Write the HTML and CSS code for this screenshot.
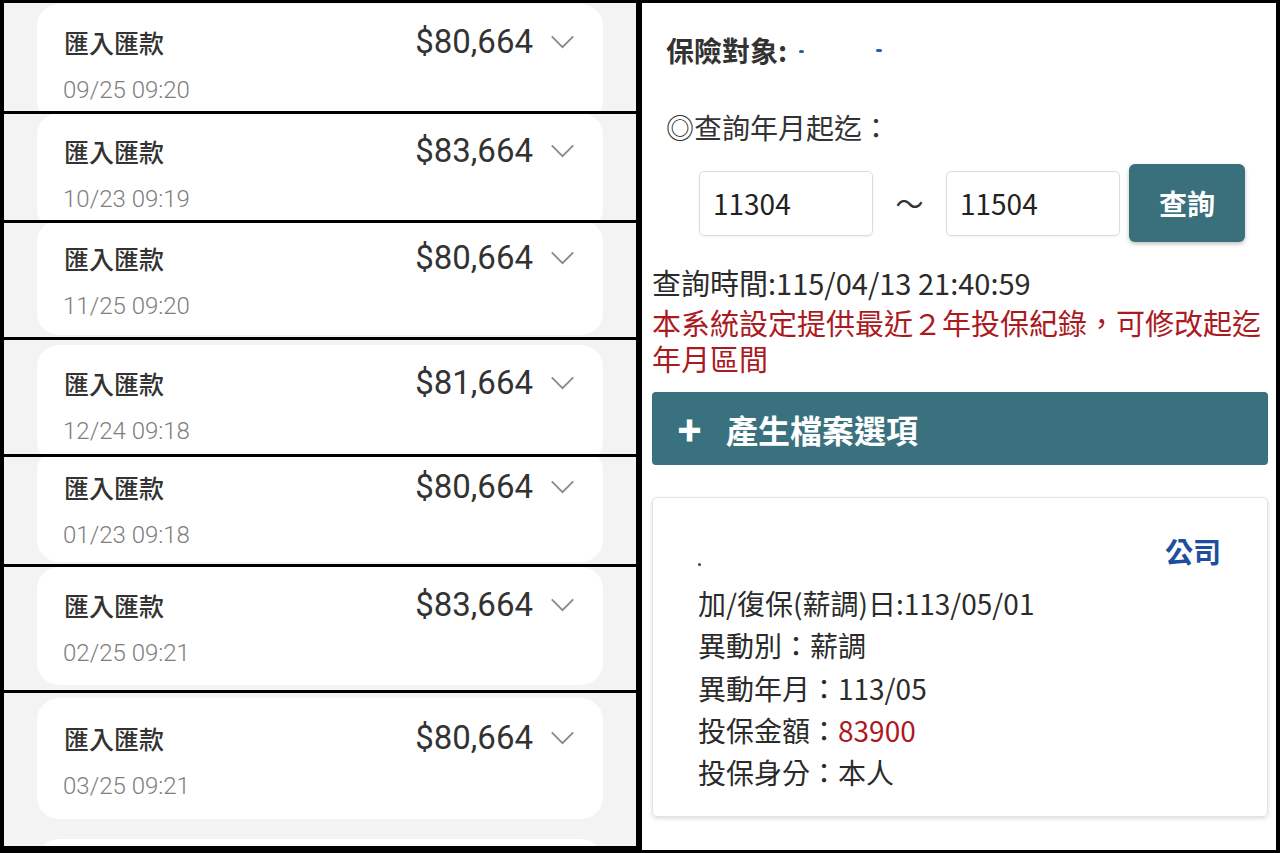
FILE: index.html
```html
<!DOCTYPE html>
<html lang="zh-Hant">
<head>
<meta charset="utf-8">
<title>匯款與投保紀錄</title>
<link rel="stylesheet" href="styles.css">
</head>
<body>
<div class="collage">
  <div class="left">
    <div class="strip s1">
      <div class="card">
        <div class="row"><span class="title">匯入匯款</span><span class="amt">$80,664<svg class="chev" viewBox="0 0 26 15"><polyline points="1.5,1.5 13,13 24.5,1.5"/></svg></span></div>
        <div class="date">09/25 09:20</div>
      </div>
    </div>
    <div class="strip s2">
      <div class="card">
        <div class="row"><span class="title">匯入匯款</span><span class="amt">$83,664<svg class="chev" viewBox="0 0 26 15"><polyline points="1.5,1.5 13,13 24.5,1.5"/></svg></span></div>
        <div class="date">10/23 09:19</div>
      </div>
    </div>
    <div class="strip s3">
      <div class="card">
        <div class="row"><span class="title">匯入匯款</span><span class="amt">$80,664<svg class="chev" viewBox="0 0 26 15"><polyline points="1.5,1.5 13,13 24.5,1.5"/></svg></span></div>
        <div class="date">11/25 09:20</div>
      </div>
    </div>
    <div class="strip s4">
      <div class="card">
        <div class="row"><span class="title">匯入匯款</span><span class="amt">$81,664<svg class="chev" viewBox="0 0 26 15"><polyline points="1.5,1.5 13,13 24.5,1.5"/></svg></span></div>
        <div class="date">12/24 09:18</div>
      </div>
    </div>
    <div class="strip s5">
      <div class="card">
        <div class="row"><span class="title">匯入匯款</span><span class="amt">$80,664<svg class="chev" viewBox="0 0 26 15"><polyline points="1.5,1.5 13,13 24.5,1.5"/></svg></span></div>
        <div class="date">01/23 09:18</div>
      </div>
    </div>
    <div class="strip s6">
      <div class="card">
        <div class="row"><span class="title">匯入匯款</span><span class="amt">$83,664<svg class="chev" viewBox="0 0 26 15"><polyline points="1.5,1.5 13,13 24.5,1.5"/></svg></span></div>
        <div class="date">02/25 09:21</div>
      </div>
    </div>
    <div class="strip s7">
      <div class="card">
        <div class="row"><span class="title">匯入匯款</span><span class="amt">$80,664<svg class="chev" viewBox="0 0 26 15"><polyline points="1.5,1.5 13,13 24.5,1.5"/></svg></span></div>
        <div class="date">03/25 09:21</div>
      </div>
      <div class="card next"></div>
    </div>
  </div>

  <div class="right">
    <div class="head">
      <div class="target">保險對象:<span class="speck sp1"></span><span class="speck sp2"></span></div>
      <div class="range-label">◎查詢年月起迄：</div>
      <div class="range">
        <div class="input">11304</div>
        <span class="tilde">～</span>
        <div class="input">11504</div>
        <button class="btn">查詢</button>
      </div>
    </div>
    <div class="body">
      <div class="qtime">查詢時間:115/04/13 21:40:59</div>
      <div class="notice">本系統設定提供最近２年投保紀錄，可修改起迄年月區間</div>
      <div class="bar"><span class="plus">✚</span><span>產生檔案選項</span></div>
      <div class="record">
        <div class="rec-head"><span class="speck sp3"></span><span class="company">公司</span></div>
        <div class="line">加/復保(薪調)日:113/05/01</div>
        <div class="line">異動別：薪調</div>
        <div class="line">異動年月：113/05</div>
        <div class="line">投保金額：<span class="red">83900</span></div>
        <div class="line">投保身分：本人</div>
      </div>
    </div>
  </div>
</div>
</body>
</html>
```
FILE: styles.css
```css
* { box-sizing: border-box; }
html, body { margin: 0; padding: 0; }
body {
  background: #000;
  width: 1280px;
  height: 853px;
  overflow: hidden;
}
.collage {
  display: flex;
  gap: 6px;
  padding: 3px 4px 3px 4px;
  height: 853px;
}

/* ---------- left column ---------- */
.left {
  width: 632px;
  display: flex;
  flex-direction: column;
  gap: 3px;
}
.strip {
  background: #f3f3f3;
  overflow: hidden;
  flex: none;
}
.s1 { height: 108px; }
.s2 { height: 106px; }
.s3 { height: 114px; }
.s4 { height: 114px; }
.s5 { height: 107px; }
.s6 { height: 123px; }
.s7 { height: 153px; }

.card {
  margin-left: 33px;
  width: 566px;
  height: 118px;
  background: #fff;
  border-radius: 22px;
  padding: 23px 28px 0 27px;
}
.s1 .card { margin-top: 1px; }
.s2 .card { margin-top: -1px; }
.s3 .card { margin-top: -3px; height: 115px; }
.s4 .card { margin-top: 5px; }
.s5 .card { margin-top: -8px; height: 113px; }
.s6 .card { margin-top: 0px; }
.s7 .card { margin-top: 5px; height: 121px; padding-top: 25px; }
.s7 .card.next { margin-top: 20px; }

.row {
  display: flex;
  justify-content: space-between;
  align-items: center;
  height: 30px;
}
.title {
  font-family: "Noto Sans CJK TC", "Noto Sans CJK SC", sans-serif;
  font-size: 25px;
  font-weight: 500;
  color: #333;
  line-height: 30px;
}
.amt {
  display: flex;
  align-items: center;
  font-family: Roboto, "Noto Sans", sans-serif;
  font-size: 33px;
  color: #333;
  line-height: 30px;
}
.chev {
  width: 25px;
  height: 14px;
  margin-left: 17px;
  fill: none;
  stroke: #8a8a8a;
  stroke-width: 2;
}
.date {
  margin-top: 20px;
  margin-left: -1px;
  font-family: Roboto, "Noto Sans", sans-serif;
  font-weight: 300;
  font-size: 24px;
  line-height: 26px;
  color: #7e7e7e;
}

/* ---------- right column ---------- */
.right {
  width: 634px;
  background: #fff;
  font-family: "Noto Sans CJK TC", "Noto Sans CJK SC", sans-serif;
  color: #2b2b2b;
}
.head { padding-left: 24px; }
.target {
  margin-top: 27px;
  font-size: 28px;
  font-weight: 700;
  line-height: 40px;
  color: #333;
  display: flex;
  align-items: center;
}
.speck {
  display: inline-block;
  width: 5px;
  height: 3px;
  background: #2a5da8;
  border-radius: 2px;
}
.sp1 { margin-left: 12px; margin-top: 2px; }
.sp2 { margin-left: 72px; width: 6px; }
.range-label {
  margin-top: 37px;
  font-size: 28px;
  line-height: 40px;
  color: #333;
}
.range {
  margin-top: 17px;
  margin-left: 33px;
  display: flex;
  align-items: center;
  height: 78px;
}
.input {
  width: 174px;
  height: 65px;
  border: 1px solid #dcdcdc;
  border-radius: 5px;
  box-shadow: 0 1px 2px rgba(0,0,0,0.06);
  padding-left: 13px;
  font-size: 28px;
  line-height: 63px;
  color: #222;
}
.tilde {
  width: 73px;
  text-align: center;
  font-size: 28px;
  color: #333;
}
.btn {
  margin-left: 9px;
  width: 116px;
  height: 78px;
  border: none;
  border-radius: 6px;
  background: #3a6f7c;
  color: #fff;
  font-family: "Noto Sans CJK TC", "Noto Sans CJK SC", sans-serif;
  font-size: 28px;
  font-weight: 700;
  box-shadow: 0 2px 4px rgba(0,0,0,0.25);
  padding: 0;
}

.body { padding: 0 8px 0 10px; }
.qtime {
  margin-top: 21px;
  font-size: 29px;
  line-height: 38px;
  color: #2b2b2b;
}
.notice {
  margin-top: 3px;
  font-size: 29px;
  line-height: 36px;
  color: #ab1a1f;
}
.bar {
  margin-top: 16px;
  height: 73px;
  background: #3a717e;
  border-radius: 4px;
  display: flex;
  align-items: center;
  color: #fff;
  font-size: 32px;
  font-weight: 700;
  padding-left: 25px;
}
.plus {
  font-size: 25px;
  width: 49px;
}
.record {
  margin-top: 32px;
  height: 320px;
  border: 1px solid #e2e2e2;
  border-radius: 5px;
  box-shadow: 0 2px 4px rgba(0,0,0,0.12);
  padding: 32px 46px 0 45px;
}
.rec-head {
  display: flex;
  justify-content: space-between;
  align-items: center;
  height: 42px;
  margin-bottom: 10px;
}
.sp3 { width: 3px; height: 3px; background: #444; margin-top: 26px; }
.company {
  font-size: 28px;
  font-weight: 700;
  color: #1d4f9e;
}
.line {
  font-size: 28px;
  line-height: 42.3px;
  color: #2b2b2b;
}
.red { color: #ab1a1f; }
```
